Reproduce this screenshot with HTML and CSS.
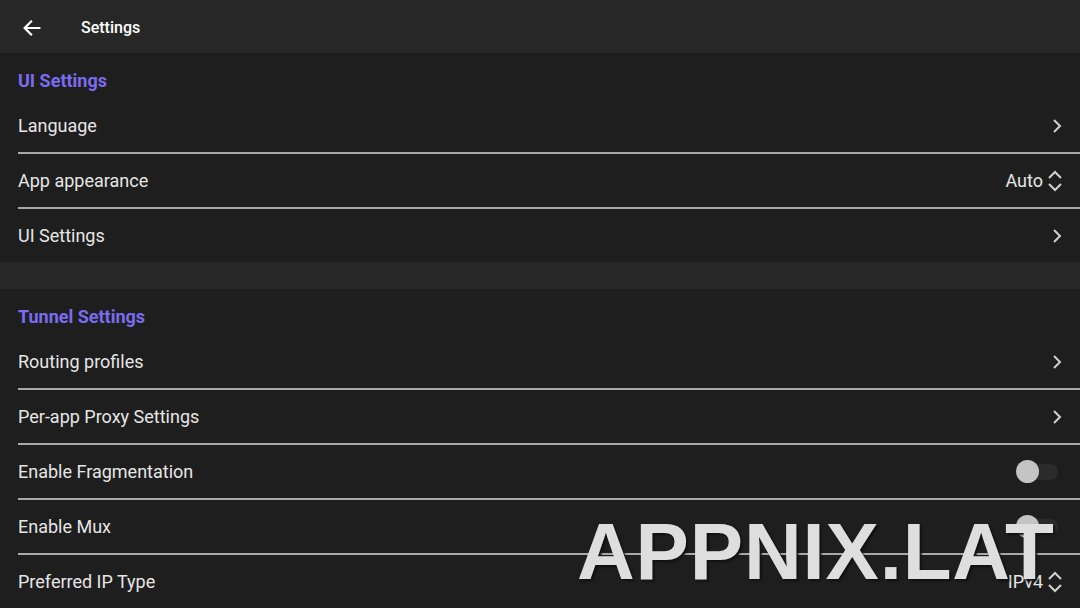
FILE: index.html
```html
<!DOCTYPE html>
<html lang="en">
<head>
    <meta charset="UTF-8">
    <meta name="viewport" content="width=device-width, initial-scale=1.0">
    <title>Settings</title>
    <link rel="stylesheet" href="styles.css">
</head>
<body>
    <header class="topbar">
        <button class="back" aria-label="Back">
            <svg width="22" height="22" viewBox="0 0 24 24"><path d="M20 12H5M11 5l-7 7 7 7" fill="none" stroke="#fff" stroke-width="2.4" stroke-linecap="square"/></svg>
        </button>
        <span class="title">Settings</span>
    </header>

    <section class="group">
        <h3>UI Settings</h3>
        <div class="row">
            <span>Language</span>
            <svg class="chev" viewBox="0 0 12 16"><path d="M3 2l6 6-6 6" /></svg>
        </div>
        <div class="row">
            <span>App appearance</span>
            <span class="value">Auto <svg class="updown" viewBox="0 0 16 24"><path d="M2 9l6-6 6 6M2 15l6 6 6-6" /></svg></span>
        </div>
        <div class="row">
            <span>UI Settings</span>
            <svg class="chev" viewBox="0 0 12 16"><path d="M3 2l6 6-6 6" /></svg>
        </div>
    </section>

    <div class="spacer"></div>

    <section class="group">
        <h3>Tunnel Settings</h3>
        <div class="row">
            <span>Routing profiles</span>
            <svg class="chev" viewBox="0 0 12 16"><path d="M3 2l6 6-6 6" /></svg>
        </div>
        <div class="row">
            <span>Per-app Proxy Settings</span>
            <svg class="chev" viewBox="0 0 12 16"><path d="M3 2l6 6-6 6" /></svg>
        </div>
        <div class="row">
            <span>Enable Fragmentation</span>
            <span class="switch"><span class="knob"></span></span>
        </div>
        <div class="row">
            <span>Enable Mux</span>
            <span class="switch"><span class="knob"></span></span>
        </div>
        <div class="row">
            <span>Preferred IP Type</span>
            <span class="value">IPv4 <svg class="updown" viewBox="0 0 16 24"><path d="M2 9l6-6 6 6M2 15l6 6 6-6" /></svg></span>
        </div>
    </section>

    <div class="watermark">APPNIX.LAT</div>
</body>
</html>
```

FILE: styles.css
```css
body {
    margin: 0;
    background-color: #1e1e1e;
    color: #e6e6e6;
    font-family: Roboto, 'Liberation Sans', sans-serif;
    overflow: hidden;
    height: 608px;
    position: relative;
}
.topbar {
    height: 53px;
    box-sizing: border-box;
    padding-top: 2px;
    background-color: #272727;
    display: flex;
    align-items: center;
}
.back {
    background: none;
    border: none;
    padding: 0;
    margin-left: 21px;
    width: 22px;
    height: 22px;
    display: flex;
}
.title {
    margin-left: 38px;
    font-size: 16px;
    font-weight: 500;
    color: #fff;
}
.group {
    background-color: #1e1e1e;
}
.group h3 {
    margin: 0;
    height: 46px;
    box-sizing: border-box;
    padding: 17px 0 0 18px;
    font-size: 18px;
    font-weight: 700;
    color: #7b6cef;
}
.row {
    height: 55px;
    margin-left: 18px;
    padding-right: 17px;
    display: flex;
    align-items: center;
    justify-content: space-between;
    font-size: 18px;
    color: #e6e6e6;
    border-bottom: 2px solid #a9a9a9;
    box-sizing: border-box;
}
.row:last-child {
    border-bottom: none;
    height: 53px;
}
.chev {
    width: 12px;
    height: 16px;
}
.chev path, .updown path {
    fill: none;
    stroke: #d0d0d0;
    stroke-width: 2;
}
.value {
    display: flex;
    align-items: center;
    gap: 4px;
    color: #e6e6e6;
}
.updown {
    width: 16px;
    height: 24px;
}
.spacer {
    height: 27px;
    background-color: #272727;
}
.switch {
    width: 41px;
    height: 16px;
    border-radius: 8px;
    background-color: #2b2b2b;
    position: relative;
    margin-right: 5px;
}
.knob {
    position: absolute;
    left: -1px;
    top: -4px;
    width: 23px;
    height: 23px;
    border-radius: 50%;
    background-color: #c4c4c4;
}
/* brand overlay in the lower right corner */
.watermark {
    position: absolute;
    left: 577px;
    top: 512px;
    font-family: 'Liberation Sans', Arial, sans-serif;
    font-weight: 700;
    font-size: 80px;
    letter-spacing: 0.8px;
    color: #dedede;
    text-shadow: 2px 2px 2px #111;
    line-height: 1;
    white-space: nowrap;
}
```
